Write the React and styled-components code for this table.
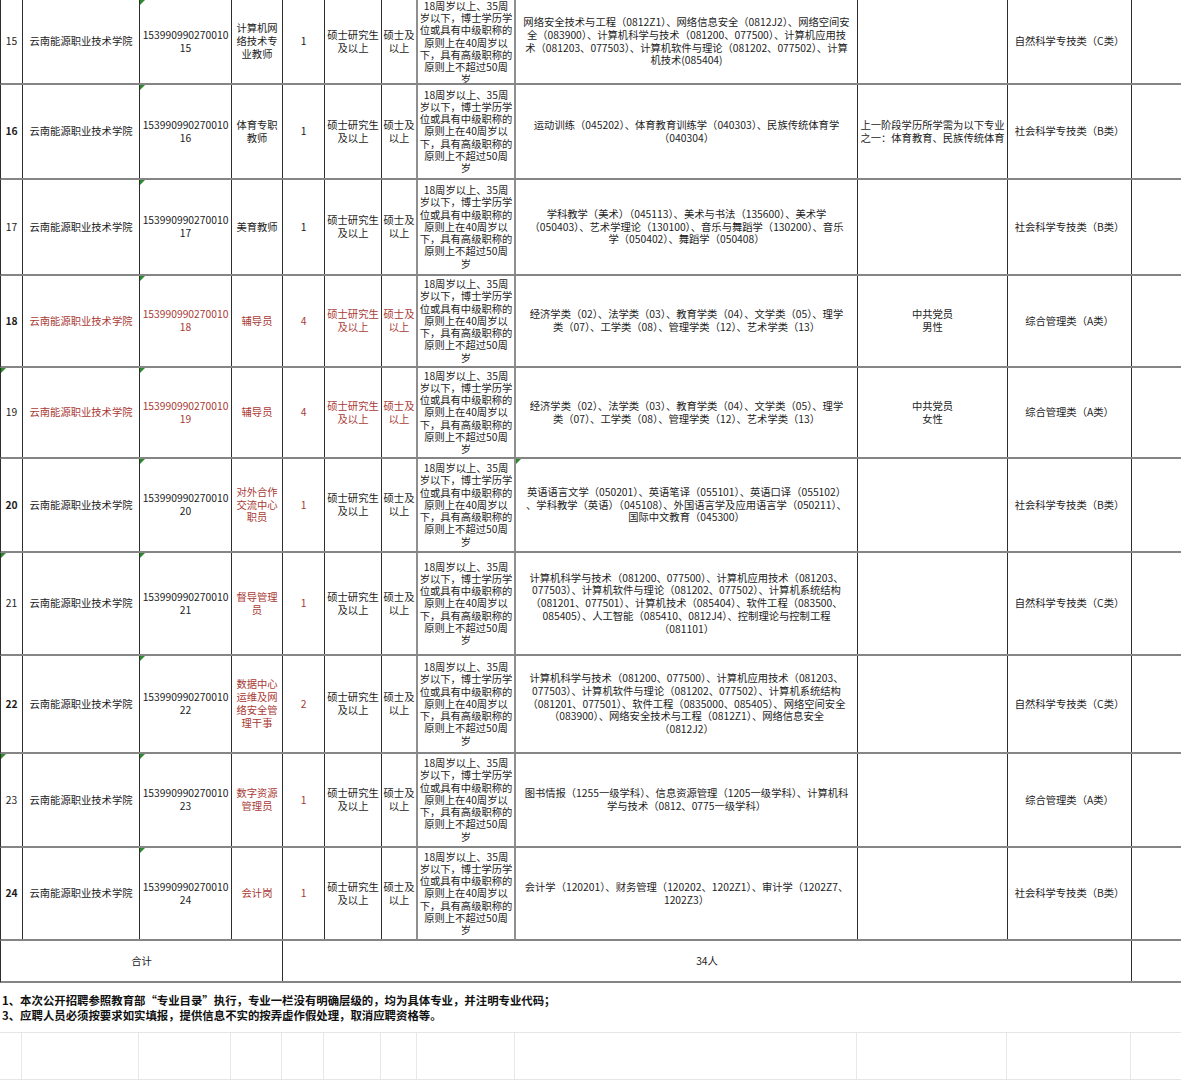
import styled, { createGlobalStyle, css } from "styled-components";

const COLS = "22px 117px 92px 51px 42px 57px 36px 98px 342px 150px 124px 50px";
const RED = "#a93a35";
const INK = "#1c1c1c";

const UNIT = "云南能源职业技术学院";
const CODE = "153990990270010";
const AGE =
    "18周岁以上、35周\n岁以下，博士学历学\n位或具有中级职称的\n原则上在40周岁以\n下，具有高级职称的\n原则上不超过50周\n岁";

const rows = [
    {
        no: 15,
        h: 85,
        post: "计算机网\n络技术专\n业教师",
        count: "1",
        major: "网络安全技术与工程（0812Z1）、网络信息安全（0812J2）、网络空间安\n全（083900）、计算机科学与技术（081200、077500）、计算机应用技\n术（081203、077503）、计算机软件与理论（081202、077502）、计算\n机技术(085404)",
        other: "",
        exam: "自然科学专技类（C类）",
    },
    {
        no: 16,
        h: 95,
        post: "体育专职\n教师",
        count: "1",
        major: "运动训练（045202）、体育教育训练学（040303）、民族传统体育学\n（040304）",
        other: "上一阶段学历所学需为以下专业\n之一：体育教育、民族传统体育",
        exam: "社会科学专技类（B类）",
    },
    {
        no: 17,
        h: 96,
        post: "美育教师",
        count: "1",
        major: "学科教学（美术）（045113）、美术与书法（135600）、美术学\n（050403）、艺术学理论（130100）、音乐与舞蹈学（130200）、音乐\n学（050402）、舞蹈学（050408）",
        other: "",
        exam: "社会科学专技类（B类）",
    },
    {
        no: 18,
        h: 92,
        post: "辅导员",
        count: "4",
        allRed: true,
        postRed: true,
        major: "经济学类（02）、法学类（03）、教育学类（04）、文学类（05）、理学\n类（07）、工学类（08）、管理学类（12）、艺术学类（13）",
        other: "中共党员\n男性",
        exam: "综合管理类（A类）",
    },
    {
        no: 19,
        h: 91,
        post: "辅导员",
        count: "4",
        allRed: true,
        postRed: true,
        flagNo: true,
        major: "经济学类（02）、法学类（03）、教育学类（04）、文学类（05）、理学\n类（07）、工学类（08）、管理学类（12）、艺术学类（13）",
        other: "中共党员\n女性",
        exam: "综合管理类（A类）",
    },
    {
        no: 20,
        h: 94,
        post: "对外合作\n交流中心\n职员",
        count: "1",
        postRed: true,
        flagMajor: true,
        major: "英语语言文学（050201）、英语笔译（055101）、英语口译（055102）\n、学科教学（英语）（045108）、外国语言学及应用语言学（050211）、\n国际中文教育（045300）",
        other: "",
        exam: "社会科学专技类（B类）",
    },
    {
        no: 21,
        h: 103,
        post: "督导管理\n员",
        count: "1",
        postRed: true,
        flagNo: true,
        major: "计算机科学与技术（081200、077500）、计算机应用技术（081203、\n077503）、计算机软件与理论（081202、077502）、计算机系统结构\n（081201、077501）、计算机技术（085404）、软件工程（083500、\n085405）、人工智能（085410、0812J4）、控制理论与控制工程\n（081101）",
        other: "",
        exam: "自然科学专技类（C类）",
    },
    {
        no: 22,
        h: 98,
        post: "数据中心\n运维及网\n络安全管\n理干事",
        count: "2",
        postRed: true,
        major: "计算机科学与技术（081200、077500）、计算机应用技术（081203、\n077503）、计算机软件与理论（081202、077502）、计算机系统结构\n（081201、077501）、软件工程（0835000、085405）、网络空间安全\n（083900）、网络安全技术与工程（0812Z1）、网络信息安全\n（0812J2）",
        other: "",
        exam: "自然科学专技类（C类）",
    },
    {
        no: 23,
        h: 94,
        post: "数字资源\n管理员",
        count: "1",
        postRed: true,
        flagNo: true,
        major: "图书情报（1255一级学科）、信息资源管理（1205一级学科）、计算机科\n学与技术（0812、0775一级学科）",
        other: "",
        exam: "综合管理类（A类）",
    },
    {
        no: 24,
        h: 93,
        post: "会计岗",
        count: "1",
        postRed: true,
        major: "会计学（120201）、财务管理（120202、1202Z1）、审计学（1202Z7、\n1202Z3）",
        other: "",
        exam: "社会科学专技类（B类）",
    },
];

function App() {
    return (
        <>
            <GlobalStyle />
            <Sheet>
                {rows.map((r) => (
                    <Row key={r.no} $h={r.h}>
                        <Cell $bold={r.no % 2 === 0} $flag={r.flagNo}>
                            {r.no}
                        </Cell>
                        <Cell $red={r.allRed}>{UNIT}</Cell>
                        <Cell $red={r.allRed} $flag>
                            {`${CODE}\n${r.no}`}
                        </Cell>
                        <Cell $red={r.postRed}>{r.post}</Cell>
                        <Cell $red={r.postRed}>{r.count}</Cell>
                        <Cell $red={r.allRed}>{"硕士研究生\n及以上"}</Cell>
                        <Cell $red={r.allRed} $edge>
                            {"硕士及\n以上"}
                        </Cell>
                        <Cell $edge $tight>
                            {AGE}
                        </Cell>
                        <Cell $flag={r.flagMajor}>{r.major}</Cell>
                        <Cell>{r.other}</Cell>
                        <Cell>{r.exam}</Cell>
                        <Cell $last />
                    </Row>
                ))}
                <Row $h={42}>
                    <Cell $span="1 / 5">合计</Cell>
                    <Cell $span="5 / 12">34人</Cell>
                    <Cell $last />
                </Row>
                <Notes>
                    <NoteLine>
                        1、本次公开招聘参照教育部“专业目录”执行，专业一栏没有明确层级的，均为具体专业，并注明专业代码；
                    </NoteLine>
                    <NoteLine>3、应聘人员必须按要求如实填报，提供信息不实的按弄虚作假处理，取消应聘资格等。</NoteLine>
                </Notes>
                {[0, 1].map((i) => (
                    <BlankRow key={i}>
                        {Array.from({ length: 12 }).map((_, j) => (
                            <BlankCell key={j} />
                        ))}
                    </BlankRow>
                ))}
            </Sheet>
        </>
    );
}

export default App;

const GlobalStyle = createGlobalStyle`
    * {
        box-sizing: border-box;
    }

    html,
    body {
        margin: 0;
        padding: 0;
        background: #ffffff;
        overflow: hidden;
    }

    body {
        font-family: "Noto Sans CJK SC", "Liberation Sans", sans-serif;
        font-size: 10.3px;
        color: ${INK};
    }
`;

const Sheet = styled.div`
    width: 1181px;
    display: flex;
    flex-direction: column;
    background: #ffffff;
`;

const Row = styled.div`
    display: grid;
    grid-template-columns: ${COLS};
    height: ${(props) => props.$h}px;
    border-left: 1px solid #2e2e2e;
    border-bottom: 2px solid #858585;
`;

const Cell = styled.div`
    position: relative;
    display: flex;
    align-items: safe center;
    justify-content: center;
    grid-column: ${(props) => props.$span || "auto"};
    padding: 0 1px;
    overflow: hidden;
    white-space: pre;
    text-align: center;
    line-height: ${(props) => (props.$tight ? "12.2px" : "12.8px")};
    color: ${(props) => (props.$red ? RED : INK)};
    font-weight: ${(props) => (props.$bold ? 700 : 400)};
    border-right: ${(props) =>
        props.$last ? "none" : props.$edge ? "2px solid #8f8f8f" : "1px solid #2e2e2e"};

    ${(props) =>
        props.$flag &&
        css`
            &::before {
                content: "";
                position: absolute;
                top: 0;
                left: 0;
                border-top: 5px solid #2f8a2f;
                border-right: 5px solid transparent;
            }
        `}
`;

const Notes = styled.div`
    height: 50px;
    display: flex;
    flex-direction: column;
    justify-content: center;
    gap: 1px;
    padding-left: 2px;
    font-size: 11.4px;
    font-weight: 700;
    color: #111111;
    white-space: nowrap;
    border-bottom: 1px solid #e6e6e6;
`;

const NoteLine = styled.div`
    height: 14px;
    line-height: 14px;
    overflow: visible;
`;

const BlankRow = styled.div`
    display: grid;
    grid-template-columns: ${COLS};
    height: 47px;
    border-bottom: 1px solid #e6e6e6;
`;

const BlankCell = styled.div`
    border-right: 1px solid #e8e8e8;

    &:last-child {
        border-right: none;
    }
`;
